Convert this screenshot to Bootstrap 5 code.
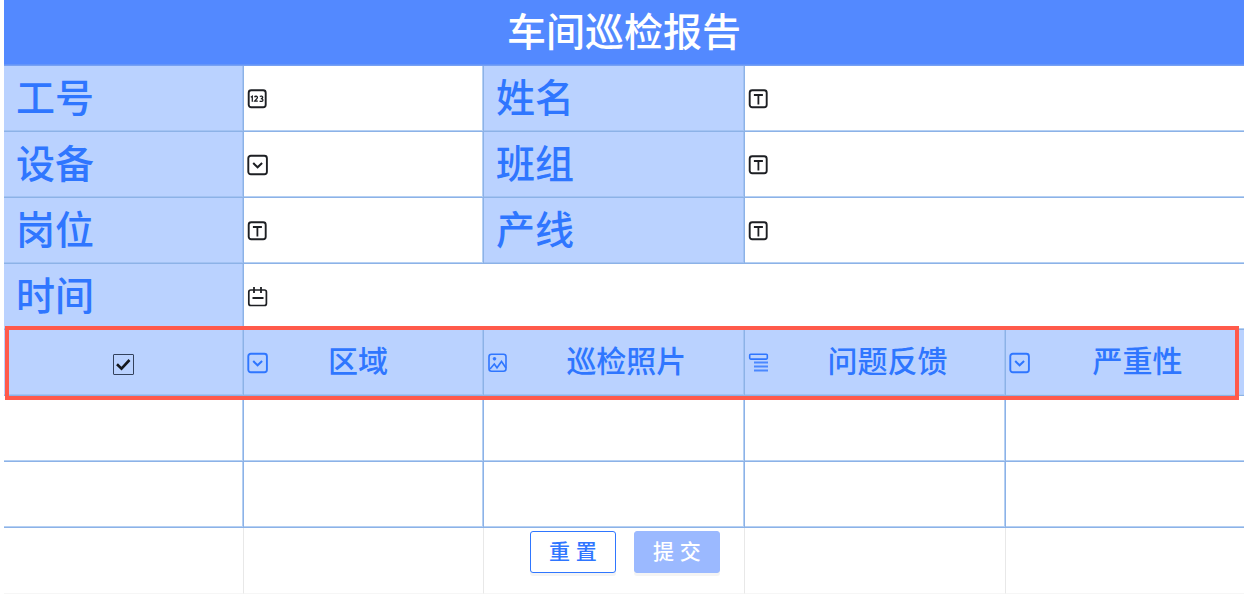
<!DOCTYPE html>
<html lang="zh-CN">
<head>
<meta charset="utf-8">
<meta name="viewport" content="width=device-width, initial-scale=1">
<title>车间巡检报告</title>
<link href="https://cdn.jsdelivr.net/npm/bootstrap@5.3.0/dist/css/bootstrap.min.css" rel="stylesheet">
<style>
  body { font-family: "Liberation Sans", "Noto Sans CJK SC", sans-serif; color: #1d1f23; }
  .report { table-layout: fixed; border-collapse: separate; border-spacing: 0; }
  .report th, .report td {
    height: 66px; padding: 0; font-weight: 500; vertical-align: middle;
    border: 0 solid #8cb2e7; border-width: 0 1px 1px 0;
    box-shadow: inset -1px -1px 0 #b5d0f3;
  }
  .report tr > :last-child { border-right-width: 0; box-shadow: inset 0 -1px 0 #b5d0f3; }
  .report tr > .report-title { background: #5389ff; color: #fff; font-size: 39px; line-height: 58px; border-bottom-color: #77a1f3; box-shadow: inset 0 -1px 0 #6595f8; }
  .report .field-label { background: #bad2ff; color: #2f76ff; font-size: 39px; line-height: 58px; padding-left: 12px; box-shadow: inset -1px -1px 0 #a3c3f3; }
  .report .col-head { background: #bad2ff; color: #2f76ff; font-size: 30px; line-height: 44px; box-shadow: inset -1px -1px 0 #a3c3f3; }
  .report .head-text { padding-bottom: 1px; }
  .report .head-short { padding-right: 36px; }
  .field-input { border: 0; background: transparent; outline: 0; min-width: 0; appearance: none; font-size: 24px; }
  .icon-cell { padding-left: 3px; }
  .icon-cell svg { width: 22px; height: 22px; flex: none; fill: none; stroke: currentColor; }
  .marked-row::after {
    content: ""; position: absolute; inset: -4px 5px -4px 1px;
    border: 4px solid #ff5a4b; pointer-events: none;
  }
  .pick-all {
    appearance: none; width: 21px; height: 21px; border: 1px solid #33415c; border-radius: 1px; vertical-align: middle;
    background: url("data:image/svg+xml,%3Csvg xmlns='http://www.w3.org/2000/svg' viewBox='0 0 19 19'%3E%3Cpath d='M3 9.3l4.5 4.4L15.500 5' fill='none' stroke='%2315181d' stroke-width='2.600'/%3E%3C/svg%3E") center / 100% no-repeat;
  }
  .report .foot-cell { vertical-align: top; border-right-color: #e8e8e8; border-bottom-color: #f6f6f6; box-shadow: none; }
  .report tr > .foot-cell:last-child { box-shadow: none; }
  .foot-actions { gap: 18px; padding-top: 3px; }
  .foot-actions .btn { width: 86px; height: 42px; padding: 0; font-size: 21px; line-height: 40px; font-weight: 500; border-radius: 3px; box-shadow: 0 3px 0 #f4f4f4; white-space: nowrap; }
  .btn-reset, .btn-reset:hover { background: #fff; border-color: #2f76ff; color: #2f76ff; }
  .btn-send, .btn-send:hover { background: #9bb9ff; border-color: #9bb9ff; color: #fff; }
</style>
<script src="https://cdn.jsdelivr.net/npm/bootstrap@5.3.0/dist/js/bootstrap.bundle.min.js"></script>
</head>
<body class="overflow-x-hidden">
<svg class="d-none" aria-hidden="true">
  <symbol id="i-text" viewBox="0 0 22 22"><rect x="1.700" y="2.300" width="17" height="17" rx="2.500" stroke-width="1.900"/><path d="M5.900 7h9M10.400 7v9.500" stroke-width="1.800"/></symbol>
  <symbol id="i-select" viewBox="0 0 22 22"><rect x="1.300" y="1.700" width="18.600" height="18.600" rx="2.500" stroke-width="1.900"/><path d="M6.200 9l4.400 4.300L15.100 9" stroke-width="2"/></symbol>
  <symbol id="i-num" viewBox="0 0 22 22"><rect x="1.700" y="2.300" width="17" height="17" rx="2.500" stroke-width="1.900"/><path d="M3.800 9.200l1.500-1v5.600M7.600 9.200c.4-1.400 3-1.300 2.800.4-.1 1.200-2 2.300-2.800 3.600h3.200M12.800 8.500c1.200-.8 3-.4 2.900.9-.1 1-1 1.300-1.900 1.300 1.200 0 2.200.5 2.100 1.500-.1 1.300-2 1.600-3.300.8" stroke-width="1.300"/></symbol>
  <symbol id="i-date" viewBox="0 0 22 22"><rect x="1.800" y="4" width="17.600" height="15.500" rx="2" stroke-width="1.700"/><path d="M7 1v6M14 1v6M5.500 12h11" stroke-width="1.800"/></symbol>
  <symbol id="i-image" viewBox="0 0 22 22"><rect x="2" y="2.300" width="17" height="17" rx="2.500" stroke-width="1.600"/><path d="M3 17l4.300-5 2.700 3.800 4.500-6.300 4.500 6.500" stroke-width="1.600"/><circle cx="7.500" cy="6.800" r="1.300" fill="currentColor" stroke-width="1"/></symbol>
  <symbol id="i-area" viewBox="0 0 22 22"><rect x="1.700" y="2.300" width="17.600" height="4.800" rx="1" stroke-width="1.600"/><path d="M6 10.500h14M6 14.500h14M6 18.500h14" stroke-width="2" opacity=".8"/></symbol>
</svg>
<form class="ps-1">
  <table class="report w-100">
    <colgroup>
      <col style="width:19.35%"><col style="width:19.35%"><col style="width:21.05%"><col style="width:21.05%"><col style="width:19.2%">
    </colgroup>
    <thead>
      <tr><th class="report-title text-center" colspan="5">车间巡检报告</th></tr>
    </thead>
    <tbody>
      <tr>
        <th class="field-label"><label for="f-no">工号</label></th>
        <td><div class="icon-cell d-flex align-items-center"><svg><use href="#i-num"/></svg><input id="f-no" class="field-input flex-fill" type="text" inputmode="numeric"></div></td>
        <th class="field-label"><label for="f-name">姓名</label></th>
        <td colspan="2"><div class="icon-cell d-flex align-items-center"><svg><use href="#i-text"/></svg><input id="f-name" class="field-input flex-fill" type="text"></div></td>
      </tr>
      <tr>
        <th class="field-label"><label for="f-device">设备</label></th>
        <td><div class="icon-cell d-flex align-items-center"><svg><use href="#i-select"/></svg><select id="f-device" class="field-input flex-fill"><option></option></select></div></td>
        <th class="field-label"><label for="f-team">班组</label></th>
        <td colspan="2"><div class="icon-cell d-flex align-items-center"><svg><use href="#i-text"/></svg><input id="f-team" class="field-input flex-fill" type="text"></div></td>
      </tr>
      <tr>
        <th class="field-label"><label for="f-post">岗位</label></th>
        <td><div class="icon-cell d-flex align-items-center"><svg><use href="#i-text"/></svg><input id="f-post" class="field-input flex-fill" type="text"></div></td>
        <th class="field-label"><label for="f-line">产线</label></th>
        <td colspan="2"><div class="icon-cell d-flex align-items-center"><svg><use href="#i-text"/></svg><input id="f-line" class="field-input flex-fill" type="text"></div></td>
      </tr>
      <tr>
        <th class="field-label"><label for="f-time">时间</label></th>
        <td colspan="4"><div class="icon-cell d-flex align-items-center"><svg><use href="#i-date"/></svg><input id="f-time" class="field-input flex-fill" type="text"></div></td>
      </tr>
      <tr class="marked-row position-relative">
        <th class="col-head text-center"><input class="pick-all" type="checkbox" checked aria-label="全选"></th>
        <th class="col-head"><div class="icon-cell d-flex align-items-center"><svg><use href="#i-select"/></svg><span class="head-text head-short flex-fill text-center">区域</span></div></th>
        <th class="col-head"><div class="icon-cell d-flex align-items-center"><svg><use href="#i-image"/></svg><span class="head-text flex-fill text-center">巡检照片</span></div></th>
        <th class="col-head"><div class="icon-cell d-flex align-items-center"><svg><use href="#i-area"/></svg><span class="head-text flex-fill text-center">问题反馈</span></div></th>
        <th class="col-head"><div class="icon-cell d-flex align-items-center"><svg><use href="#i-select"/></svg><span class="head-text flex-fill text-center">严重性</span></div></th>
      </tr>
      <tr><td></td><td></td><td></td><td></td><td></td></tr>
      <tr><td></td><td></td><td></td><td></td><td></td></tr>
    </tbody>
    <tfoot>
      <tr>
        <td class="foot-cell"></td><td class="foot-cell"></td>
        <td class="foot-cell"><div class="foot-actions d-flex justify-content-end pe-4"><button type="reset" class="btn btn-reset">重 置</button><button type="submit" class="btn btn-send">提 交</button></div></td>
        <td class="foot-cell"></td><td class="foot-cell"></td>
      </tr>
    </tfoot>
  </table>
</form>
</body>
</html>
